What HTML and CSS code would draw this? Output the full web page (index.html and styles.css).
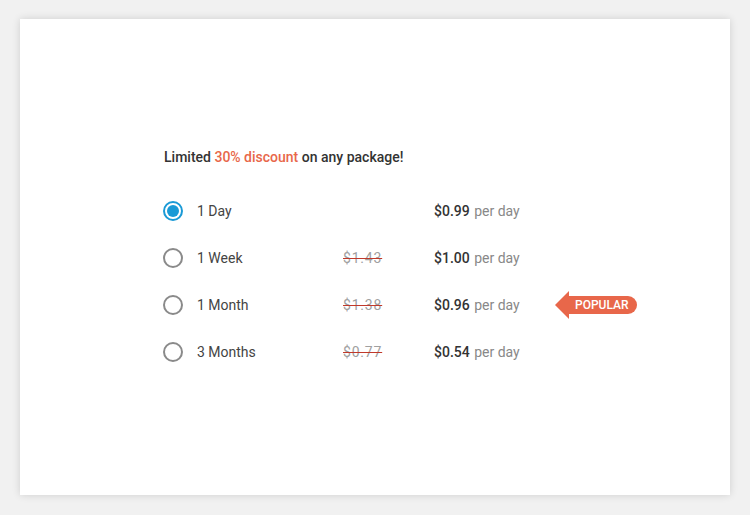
FILE: index.html
```html
<!DOCTYPE html>
<html>
<head>
  <title>Packages</title>
  <link rel="stylesheet" href="styles.css">
</head>
<body>

  <div class="card">
    <p class="promo">Limited <span class="accent">30% discount</span> on any package!</p>

    <div class="plans">
      <label class="plan">
        <span class="radio checked"></span>
        <span class="name">1 Day</span>
        <span class="old"></span>
        <span class="price"><b>$0.99</b> per day</span>
        <span></span>
      </label>

      <label class="plan">
        <span class="radio"></span>
        <span class="name">1 Week</span>
        <span class="old">$1.43</span>
        <span class="price"><b>$1.00</b> per day</span>
        <span></span>
      </label>

      <label class="plan">
        <span class="radio"></span>
        <span class="name">1 Month</span>
        <span class="old">$1.38</span>
        <span class="price"><b>$0.96</b> per day</span>
        <span class="badge">Popular</span>
      </label>

      <label class="plan">
        <span class="radio"></span>
        <span class="name">3 Months</span>
        <span class="old">$0.77</span>
        <span class="price"><b>$0.54</b> per day</span>
        <span></span>
      </label>
    </div>
  </div>

</body>
</html>
```

FILE: styles.css
```css
body {
  font-family: Roboto, "Liberation Sans", sans-serif;
  background-color: #f1f1f1;
  margin: 0;
  padding: 19px 20px 20px;
}

.card {
  background-color: #fff;
  height: 476px;
  box-shadow: 0 0 8px rgba(0, 0, 0, 0.14);
  padding: 130px 0 0 143px;
  box-sizing: border-box;
}

.promo {
  margin: 0 0 22px 1px;
  font-size: 14px;
  font-weight: 500;
  color: #333;
}

.accent {
  color: #e8674a;
}

.plans {
  display: flex;
  flex-direction: column;
}

.plan {
  display: grid;
  grid-template-columns: 20px 160px 91px 122px auto;
  align-items: center;
  height: 47px;
  font-size: 14px;
  color: #444;
  cursor: pointer;
}

.radio {
  width: 20px;
  height: 20px;
  border: 2px solid #8a8a8a;
  border-radius: 50%;
  box-sizing: border-box;
  position: relative;
}

.radio.checked {
  border-color: #1a9ad6;
}

.radio.checked::after {
  content: "";
  position: absolute;
  top: 2px;
  left: 2px;
  width: 12px;
  height: 12px;
  border-radius: 50%;
  background-color: #1a9ad6;
}

.name {
  padding-left: 14px;
}

.old {
  color: #a0a0a0;
  letter-spacing: 0.8px;
  text-decoration: line-through;
  text-decoration-color: #c0392b;
}

.price {
  color: #888;
}

.price b {
  color: #333;
  font-weight: 500;
  margin-right: 1px;
}

.badge {
  position: relative;
  justify-self: start;
  margin-left: 13px;
  background-color: #e8674a;
  color: #fff;
  font-size: 12px;
  font-weight: 500;
  text-transform: uppercase;
  line-height: 18px;
  padding: 0 8px 0 6px;
  border-radius: 0 9px 9px 0;
}

.badge::before {
  content: "";
  position: absolute;
  left: -14px;
  top: -5px;
  border-top: 14px solid transparent;
  border-bottom: 14px solid transparent;
  border-right: 14px solid #e8674a;
}
```
